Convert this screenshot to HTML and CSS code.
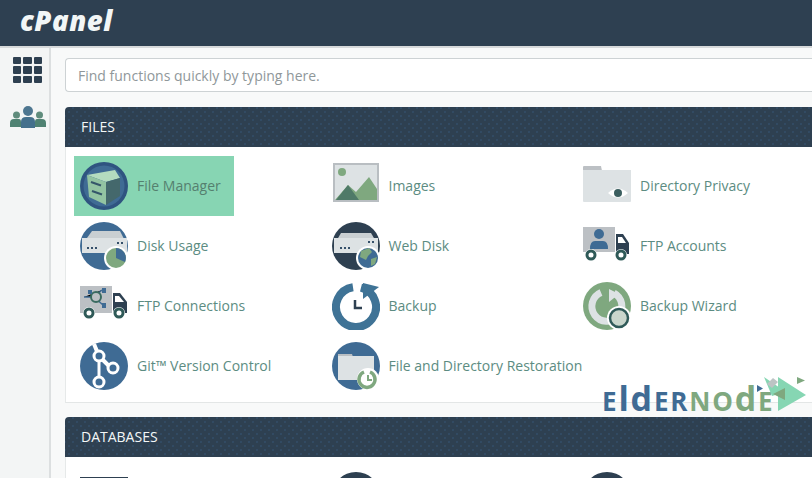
FILE: index.html
```html
<!DOCTYPE html>
<html lang="en">
<head>
<meta charset="utf-8">
<title>cPanel</title>
<link rel="stylesheet" href="styles.css">
</head>
<body>
<header class="topbar"><span class="brand">cPanel</span></header>
<div class="shell">
  <nav class="sidebar">
    <div class="apps"><i></i><i></i><i></i><i></i><i></i><i></i><i></i><i></i><i></i></div>
    <svg class="users" viewBox="0 0 36 22"><circle cx="18" cy="5" r="5" fill="#4d7690"/><circle cx="6.500" cy="9" r="3.500" fill="#5f8c7c"/><circle cx="29.500" cy="9" r="3.500" fill="#5f8c7c"/><path d="M0 21v-4q0-4 4-4h5q2 0 2 3v5zM36 21v-4q0-4-4-4h-5q-2 0-2 3v5z" fill="#4f8272"/><path d="M11 22v-6q0-5 5-5h4q5 0 5 5v6z" fill="#44708c"/></svg>
  </nav>
  <main class="main">
    <div class="search">Find functions quickly by typing here.</div>
    <section class="panel">
      <h2 class="panel-title">FILES</h2>
      <div class="grid">
        <a class="item active">
          <svg class="icon" viewBox="0 0 48 48"><circle cx="24" cy="24" r="24" fill="#2f5480"/><circle cx="24" cy="24" r="20.500" fill="#3f6b94"/><path d="M7 13l28-5 5 8-14 4z" fill="#b4dcbf"/><path d="M26 20l14-4v18l-14 9z" fill="#44686c"/><path d="M7 13l19 7v23L9 35z" fill="#93c4a2"/><path d="M11 20l10 3.500M12 29l10 3.500" stroke="#35566a" stroke-width="2"/></svg>
          <span>File Manager</span>
        </a>
        <a class="item">
          <svg class="icon" viewBox="0 0 48 48"><rect x="1" y="1" width="46" height="39" fill="#b9bec2"/><rect x="3" y="3" width="42" height="35" fill="#dde2e4"/><circle cx="10" cy="10" r="4" fill="#7fa87f"/><path d="M3 38l13-15 8 7 13-15 8 12v11z" fill="#7fa87f"/><path d="M4 38l12-15 11 15z" fill="#4f7a68"/></svg>
          <span>Images</span>
        </a>
        <a class="item">
          <svg class="icon" viewBox="0 0 48 48"><path d="M0 5q0-1 1-1h17l1 5H0z" fill="#bcc0c4"/><path d="M0 8h48v31q0 1-1 1H1q-1 0-1-1z" fill="#dde2e4"/><path d="M25 31q10-9 20 0-10 9-20 0z" fill="#fff"/><circle cx="35" cy="31" r="4" fill="#3c5f60"/></svg>
          <span>Directory Privacy</span>
        </a>
        <a class="item">
          <svg class="icon" viewBox="0 0 48 48"><circle cx="24" cy="24" r="24" fill="#3f6b94"/><path d="M12 9h28l7 14v7H2v-7z" fill="#c9cfd2"/><rect x="2" y="16" width="45" height="15" fill="#dde2e4"/><path d="M7 25h2v2H7zM11 25h2v2h-2zM15 25h2v2h-2zM37 20h2v2h-2zM41 20h2v2h-2z" fill="#35506a"/><circle cx="36" cy="36" r="12" fill="#fff"/><circle cx="36" cy="36" r="10" fill="#7fa87f"/><path d="M36 36V26a10 10 0 0 1 9 14z" fill="#3f6b94"/></svg>
          <span>Disk Usage</span>
        </a>
        <a class="item">
          <svg class="icon" viewBox="0 0 48 48"><circle cx="24" cy="24" r="24" fill="#2e4051"/><path d="M9 11h30l7 12H2z" fill="#c9cfd2"/><rect x="2" y="16" width="44" height="15" fill="#dde2e4"/><path d="M8 25h2v2H8zM12 25h2v2h-2zM16 25h2v2h-2zM36 19h2v2h-2zM40 19h2v2h-2z" fill="#35506a"/><circle cx="36" cy="36" r="12" fill="#fff"/><circle cx="36" cy="36" r="10" fill="#3f6b94"/><path d="M29 29l8-3 3 4-4 4-2 4-6-3zM39 37l6-2-2 7-4 2z" fill="#7fa87f"/></svg>
          <span>Web Disk</span>
        </a>
        <a class="item">
          <svg class="icon" viewBox="0 0 48 48"><rect x="0" y="5" width="32" height="25" fill="#bcc0c4"/><circle cx="16" cy="12" r="5" fill="#3f6b94"/><path d="M7 27q0-8 5-8h8q5 0 5 8z" fill="#3f6b94"/><path d="M33 12h7l6 9v11H33z" fill="#2e4051"/><path d="M35 15h4l4 6h-8z" fill="#fff"/><circle cx="8" cy="33" r="6" fill="#fff"/><circle cx="8" cy="33" r="4" fill="none" stroke="#2f5a58" stroke-width="3"/><circle cx="38" cy="33" r="6" fill="#fff"/><circle cx="38" cy="33" r="4" fill="none" stroke="#2f5a58" stroke-width="3"/></svg>
          <span>FTP Accounts</span>
        </a>
        <a class="item">
          <svg class="icon" viewBox="0 0 48 48"><rect x="0" y="4" width="32" height="27" fill="#bcc0c4"/><g stroke="#3f6b94" stroke-width="1.500"><path d="M4 15h10l8-7M14 15l9 8"/></g><circle cx="16" cy="15" r="5" fill="#bcc0c4" stroke="#3a6a60" stroke-width="2"/><rect x="8" y="8" width="4" height="4" fill="#3f6b94"/><rect x="22" y="6" width="4" height="5" fill="#3f6b94"/><rect x="22" y="21" width="4" height="5" fill="#3f6b94"/><path d="M33 11h7l7 9v11H33z" fill="#2e4051"/><path d="M35 14h4l5 6h-9z" fill="#fff"/><circle cx="9" cy="31" r="6" fill="#fff"/><circle cx="9" cy="31" r="4" fill="none" stroke="#2f5a58" stroke-width="3"/><circle cx="39" cy="31" r="6" fill="#fff"/><circle cx="39" cy="31" r="4" fill="none" stroke="#2f5a58" stroke-width="3"/></svg>
          <span>FTP Connections</span>
        </a>
        <a class="item">
          <svg class="icon" viewBox="0 0 48 48"><path d="M29 5.600A20 20 0 1 1 21 5.200" fill="none" stroke="#3f7396" stroke-width="8"/><path d="M31 1l16 4-16 12z" fill="#3f7396"/><path d="M23 18v8h7" fill="none" stroke="#2e4051" stroke-width="2.500"/></svg>
          <span>Backup</span>
        </a>
        <a class="item">
          <svg class="icon" viewBox="0 0 48 48"><circle cx="24" cy="24" r="24" fill="#7fa87f"/><path d="M18 10.500a15 15 0 1 0 13 .6" fill="none" stroke="#dde2e4" stroke-width="7"/><path d="M26 7v13l10-8z" fill="#dde2e4"/><circle cx="36" cy="36" r="12" fill="#fff"/><circle cx="36" cy="36" r="9" fill="#c9d6cc" stroke="#2f5a58" stroke-width="2.500"/></svg>
          <span>Backup Wizard</span>
        </a>
        <a class="item">
          <svg class="icon" viewBox="0 0 48 48"><circle cx="24" cy="24" r="24" fill="#3f6b94"/><path d="M19 35V14" stroke="#fff" stroke-width="3"/><path d="M14 2l5 12 14 14" fill="none" stroke="#fff" stroke-width="4"/><circle cx="19" cy="14" r="5" fill="#3f6b94" stroke="#fff" stroke-width="3"/><circle cx="33" cy="26" r="5" fill="#3f6b94" stroke="#fff" stroke-width="3"/><circle cx="19" cy="40" r="5" fill="#3f6b94" stroke="#fff" stroke-width="3"/></svg>
          <span>Git™ Version Control</span>
        </a>
        <a class="item">
          <svg class="icon" viewBox="0 0 48 48"><circle cx="24" cy="24" r="24" fill="#3f6b94"/><path d="M6 12h14l1 3H6z" fill="#b9bec2"/><rect x="6" y="14" width="36" height="24" fill="#dde2e4"/><circle cx="36" cy="37" r="11" fill="#fff"/><path d="M32 30a8 8 0 1 0 6 0" fill="none" stroke="#7fa87f" stroke-width="3.500"/><path d="M36 33v5h4" fill="none" stroke="#7fa87f" stroke-width="2"/></svg>
          <span>File and Directory Restoration</span>
        </a>
      </div>
    </section>
    <section class="panel">
      <h2 class="panel-title">DATABASES</h2>
      <div class="grid">
        <a class="item"><svg class="icon" viewBox="0 0 48 48"><rect y="5" width="48" height="43" fill="#2e4051"/></svg><span></span></a>
        <a class="item"><svg class="icon" viewBox="0 0 48 48"><circle cx="24" cy="24" r="24" fill="#2e4051"/></svg><span></span></a>
        <a class="item"><svg class="icon" viewBox="0 0 48 48"><circle cx="24" cy="24" r="24" fill="#2e4051"/></svg><span></span></a>
      </div>
    </section>
  </main>
</div>
<div class="logo">
  <span class="logo-word"><span class="blue">E<b>l</b><b>d</b>ER</span><span class="green">NO<b>d</b>E</span></span>
  <svg class="logo-mark" viewBox="-4 0 52 44"><path d="M4 1l22 15-14 4z" fill="#86d6b3"/><path d="M18 1l28 18-28 16z" fill="#86d6b3"/><path d="M-3 9l6 3.500-6 3.500z" fill="#3f6b94"/><path d="M13 2l5 4-6 6-5-4z" fill="#bcc4c4"/><path d="M25 12v12l-12-6z" fill="#7fa87f"/><path d="M37 1l8 3.500-8 3.500z" fill="#7fa87f"/></svg>
</div>
</body>
</html>
```
FILE: styles.css
```css
* { box-sizing: border-box; }
html, body { margin: 0; height: 478px; overflow: hidden; }
body { font-family: "Open Sans", sans-serif; font-size: 14px; background: #f8f9f9; position: relative; }
.topbar { height: 46px; background: #2e4051; padding: 5px 0 0 20px; }
.brand { font: italic 800 27.500px/32px "Open Sans", sans-serif; color: #f2f6f6; letter-spacing: .5px; display: block; }
.shell { display: flex; height: 432px; border-top: 2px solid #d6d9da; }
.sidebar { width: 51px; flex: none; background: #f3f5f5; border-right: 2px solid #dcdfe0; display: flex; flex-direction: column; align-items: center; padding: 9px 0 0 6px; }
.apps { width: 29px; height: 26px; display: grid; grid-template-columns: repeat(3, 1fr); gap: 2px; }
.apps i { background: #2e4051; border-radius: 1px; }
.users { width: 36px; height: 22px; margin-top: 23px; }
.main { flex: 1; min-width: 0; padding: 10px 0 0 14px; overflow: hidden; }
.search { height: 34px; border: 1px solid #cdd2d4; border-right: 0; border-radius: 4px 0 0 4px; background: #fff; color: #8f979a; padding-left: 12px; line-height: 33px; font-size: 14px; }
.panel { margin-top: 15px; }
.panel + .panel { margin-top: 14px; }
.panel-title { margin: 0; height: 40px; padding-left: 16px; background-color: #2e4051; background-image: radial-gradient(circle, #3a618a .5px, transparent .8px), radial-gradient(circle, #3a618a .5px, transparent .8px); background-size: 8px 8px; background-position: 0 1px, 4px 5px; border-radius: 4px 0 0 0; color: #f4f7f7; font-size: 14px; font-weight: 400; line-height: 40px; }
.grid { display: grid; grid-template-columns: repeat(3, 251.500px); grid-auto-rows: 60px; padding: 9px 0 6px 8px; background: #fff; border-left: 1px solid #e6e9e9; border-bottom: 1px solid #e3e6e6; width: 100%; overflow: hidden; }
.item { display: flex; align-items: center; gap: 9px; padding-left: 6px; width: 160px; white-space: nowrap; color: #5c8c82; }
.item span { padding-bottom: 2px; }
.item.active { background: #87d5b3; color: #55806f; }
.icon { width: 48px; height: 48px; flex: none; }
.logo { position: absolute; left: 602px; top: 376px; display: flex; align-items: flex-start; }
.logo-word { display: block; font: 700 26px/28px "Open Sans", sans-serif; margin-top: 8px; white-space: nowrap; letter-spacing: 1.800px; }
.logo-word b { font-size: 34px; line-height: 28px; font-weight: 700; }
.blue { color: #3f6b94; }
.green { color: #7fa87f; }
.logo-mark { position: absolute; left: 154px; top: 0; width: 52px; height: 44px; }
```
